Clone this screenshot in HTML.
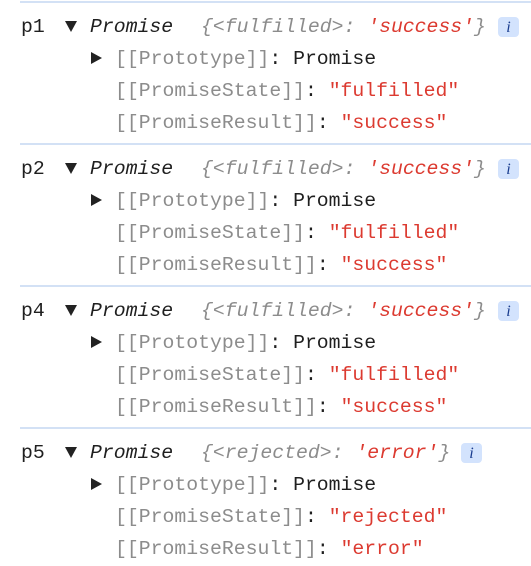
<!DOCTYPE html>
<html><head><meta charset="utf-8"><style>
body{margin:0;width:531px;height:566px;background:#fff;position:relative;overflow:hidden;font-family:"Liberation Mono","DejaVu Sans Mono",monospace;font-size:19.8px;}
.l{position:absolute;height:32px;line-height:32px;white-space:pre;}
.sep{position:absolute;left:20px;right:0;height:2px;background:#d3e1f5;}
.g{color:#8c8c8c}.r{color:#dc3a30}.k{color:#1f1f1f}.i{font-style:italic}
.tri{position:absolute;width:0;height:0;}
.dn{border-left:6px solid transparent;border-right:6px solid transparent;border-top:11px solid #222;}
.rt{border-top:6px solid transparent;border-bottom:6px solid transparent;border-left:11px solid #222;}
.info{position:absolute;width:21px;height:20px;background:#d3e3fd;border-radius:4px;color:#1a3d8f;font-style:italic;font-size:16px;line-height:21px;text-align:center;font-family:"Liberation Serif",serif;}
</style></head><body>
<div class="sep" style="top:1px"></div>
<div class="sep" style="top:143px"></div>
<div class="sep" style="top:285px"></div>
<div class="sep" style="top:427px"></div>

<div class="l k" style="left:21px;top:11px">p1</div>
<div class="tri dn" style="left:65px;top:21px"></div>
<div class="l k i" style="left:90px;top:11px">Promise</div>
<div class="l i" style="left:201px;top:11px"><span class="g">{&lt;fulfilled&gt;: </span><span class="r">'success'</span><span class="g">}</span></div>
<div class="info" style="left:498px;top:17px">i</div>
<div class="tri rt" style="left:91px;top:52px"></div>
<div class="l" style="left:115px;top:43px"><span class="g">[[Prototype]]</span><span class="k">: Promise</span></div>
<div class="l" style="left:115px;top:75px"><span class="g">[[PromiseState]]</span><span class="k">: </span><span class="r">"fulfilled"</span></div>
<div class="l" style="left:115px;top:107px"><span class="g">[[PromiseResult]]</span><span class="k">: </span><span class="r">"success"</span></div>

<div class="l k" style="left:21px;top:153px">p2</div>
<div class="tri dn" style="left:65px;top:163px"></div>
<div class="l k i" style="left:90px;top:153px">Promise</div>
<div class="l i" style="left:201px;top:153px"><span class="g">{&lt;fulfilled&gt;: </span><span class="r">'success'</span><span class="g">}</span></div>
<div class="info" style="left:498px;top:159px">i</div>
<div class="tri rt" style="left:91px;top:194px"></div>
<div class="l" style="left:115px;top:185px"><span class="g">[[Prototype]]</span><span class="k">: Promise</span></div>
<div class="l" style="left:115px;top:217px"><span class="g">[[PromiseState]]</span><span class="k">: </span><span class="r">"fulfilled"</span></div>
<div class="l" style="left:115px;top:249px"><span class="g">[[PromiseResult]]</span><span class="k">: </span><span class="r">"success"</span></div>

<div class="l k" style="left:21px;top:295px">p4</div>
<div class="tri dn" style="left:65px;top:305px"></div>
<div class="l k i" style="left:90px;top:295px">Promise</div>
<div class="l i" style="left:201px;top:295px"><span class="g">{&lt;fulfilled&gt;: </span><span class="r">'success'</span><span class="g">}</span></div>
<div class="info" style="left:498px;top:301px">i</div>
<div class="tri rt" style="left:91px;top:336px"></div>
<div class="l" style="left:115px;top:327px"><span class="g">[[Prototype]]</span><span class="k">: Promise</span></div>
<div class="l" style="left:115px;top:359px"><span class="g">[[PromiseState]]</span><span class="k">: </span><span class="r">"fulfilled"</span></div>
<div class="l" style="left:115px;top:391px"><span class="g">[[PromiseResult]]</span><span class="k">: </span><span class="r">"success"</span></div>

<div class="l k" style="left:21px;top:437px">p5</div>
<div class="tri dn" style="left:65px;top:447px"></div>
<div class="l k i" style="left:90px;top:437px">Promise</div>
<div class="l i" style="left:201px;top:437px"><span class="g">{&lt;rejected&gt;: </span><span class="r">'error'</span><span class="g">}</span></div>
<div class="info" style="left:461px;top:443px">i</div>
<div class="tri rt" style="left:91px;top:478px"></div>
<div class="l" style="left:115px;top:469px"><span class="g">[[Prototype]]</span><span class="k">: Promise</span></div>
<div class="l" style="left:115px;top:501px"><span class="g">[[PromiseState]]</span><span class="k">: </span><span class="r">"rejected"</span></div>
<div class="l" style="left:115px;top:533px"><span class="g">[[PromiseResult]]</span><span class="k">: </span><span class="r">"error"</span></div>
</body></html>
